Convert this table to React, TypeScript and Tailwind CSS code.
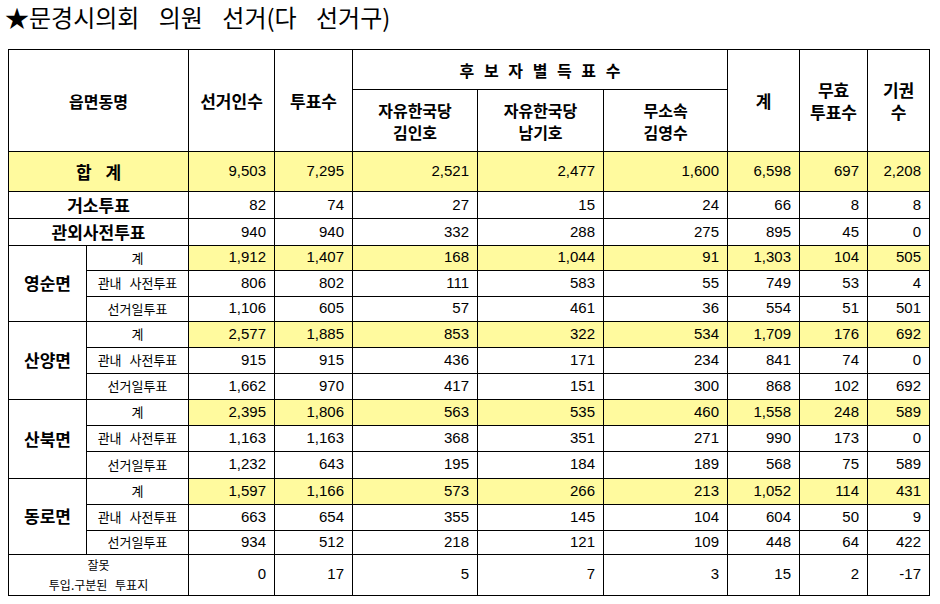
import React from "react";

type Row = { label: string; vals: string[]; h: number; yellow: boolean };
type Group = { name: string; rows: Row[] };

const KR = "font-['Noto_Sans_CJK_KR','Noto_Sans',sans-serif]";
const NUM = "font-['Liberation_Sans','Noto_Sans_CJK_KR',sans-serif]";
const YEL = "bg-[#fffa9e]";

const groups: Group[] = [
  {
    name: "영순면",
    rows: [
      { label: "계", vals: ["1,912", "1,407", "168", "1,044", "91", "1,303", "104", "505"], h: 25, yellow: true },
      { label: "관내 사전투표", vals: ["806", "802", "111", "583", "55", "749", "53", "4"], h: 26, yellow: false },
      { label: "선거일투표", vals: ["1,106", "605", "57", "461", "36", "554", "51", "501"], h: 25, yellow: false },
    ],
  },
  {
    name: "산양면",
    rows: [
      { label: "계", vals: ["2,577", "1,885", "853", "322", "534", "1,709", "176", "692"], h: 26, yellow: true },
      { label: "관내 사전투표", vals: ["915", "915", "436", "171", "234", "841", "74", "0"], h: 26, yellow: false },
      { label: "선거일투표", vals: ["1,662", "970", "417", "151", "300", "868", "102", "692"], h: 26, yellow: false },
    ],
  },
  {
    name: "산북면",
    rows: [
      { label: "계", vals: ["2,395", "1,806", "563", "535", "460", "1,558", "248", "589"], h: 26, yellow: true },
      { label: "관내 사전투표", vals: ["1,163", "1,163", "368", "351", "271", "990", "173", "0"], h: 26, yellow: false },
      { label: "선거일투표", vals: ["1,232", "643", "195", "184", "189", "568", "75", "589"], h: 27, yellow: false },
    ],
  },
  {
    name: "동로면",
    rows: [
      { label: "계", vals: ["1,597", "1,166", "573", "266", "213", "1,052", "114", "431"], h: 26, yellow: true },
      { label: "관내 사전투표", vals: ["663", "654", "355", "145", "104", "604", "50", "9"], h: 26, yellow: false },
      { label: "선거일투표", vals: ["934", "512", "218", "121", "109", "448", "64", "422"], h: 24, yellow: false },
    ],
  },
];

const cell = "border border-black p-0";

function Nums({ vals, yellow }: { vals: string[]; yellow: boolean }) {
  return (
    <>
      {vals.map((v, i) => (
        <td
          key={i}
          className={`${cell} ${yellow ? YEL : ""} ${NUM} text-right pr-[8px] text-[15px] text-black align-middle`}
        >
          {v}
        </td>
      ))}
    </>
  );
}

export default function App() {
  const widths = [78, 102, 86, 78, 125, 126, 124, 72, 68, 62];
  const head = `${cell} ${KR} text-[17px] font-bold leading-[22px]`;
  const sub = `${cell} ${KR} text-[16px] font-bold leading-[22px]`;
  return (
    <div className="w-[940px] h-[604px] bg-white text-black overflow-hidden">
      <div className={`h-[49px] pl-[5px] pt-[3px] ${KR} text-[24px] leading-[28px] [word-spacing:14px]`}>
        ★문경시의회 의원 선거(다 선거구)
      </div>
      <table className="ml-[8px] w-[922px] table-fixed border-collapse border border-black">
        <colgroup>
          {widths.map((w, i) => (
            <col key={i} style={{ width: w }} />
          ))}
        </colgroup>
        <thead>
          <tr className="h-[40px]">
            <th rowSpan={2} colSpan={2} className={`${cell} ${KR} text-[16px] font-bold leading-[20px]`}>
              읍면동명
            </th>
            <th rowSpan={2} className={head}>
              선거인수
            </th>
            <th rowSpan={2} className={head}>
              투표수
            </th>
            <th colSpan={3} className={`${cell} ${KR} text-[16px] font-bold leading-[20px] [word-spacing:6px]`}>
              후 보 자 별 득 표 수
            </th>
            <th rowSpan={2} className={head}>
              계
            </th>
            <th rowSpan={2} className={head}>
              무효
              <br />
              투표수
            </th>
            <th rowSpan={2} className={head}>
              기권
              <br />수
            </th>
          </tr>
          <tr className="h-[62px]">
            <th className={sub}>
              자유한국당
              <br />
              김인호
            </th>
            <th className={sub}>
              자유한국당
              <br />
              남기호
            </th>
            <th className={sub}>
              무소속
              <br />
              김영수
            </th>
          </tr>
        </thead>
        <tbody>
          <tr className="h-[40px]">
            <td colSpan={2} className={`${cell} ${YEL} ${KR} text-center text-[17px] font-bold [word-spacing:10px]`}>
              합 계
            </td>
            <Nums vals={["9,503", "7,295", "2,521", "2,477", "1,600", "6,598", "697", "2,208"]} yellow />
          </tr>
          <tr className="h-[27px]">
            <td colSpan={2} className={`${cell} ${KR} text-center text-[17px] font-bold`}>
              거소투표
            </td>
            <Nums vals={["82", "74", "27", "15", "24", "66", "8", "8"]} yellow={false} />
          </tr>
          <tr className="h-[26px]">
            <td colSpan={2} className={`${cell} ${KR} text-center text-[17px] font-bold`}>
              관외사전투표
            </td>
            <Nums vals={["940", "940", "332", "288", "275", "895", "45", "0"]} yellow={false} />
          </tr>
          {groups.map((g) =>
            g.rows.map((r, ri) => (
              <tr key={g.name + ri} style={{ height: r.h }}>
                {ri === 0 && (
                  <td rowSpan={3} className={`${cell} ${KR} text-center text-[17px] font-bold`}>
                    {g.name}
                  </td>
                )}
                <td className={`${cell} ${KR} text-center text-[13px] leading-[16px] [word-spacing:5px]`}>
                  {r.label}
                </td>
                <Nums vals={r.vals} yellow={r.yellow} />
              </tr>
            ))
          )}
          <tr className="h-[40px]">
            <td colSpan={2} className={`${cell} ${KR} text-center text-[12px] leading-[20px] [word-spacing:5px]`}>
              잘못
              <br />
              투입.구분된 투표지
            </td>
            <Nums vals={["0", "17", "5", "7", "3", "15", "2", "-17"]} yellow={false} />
          </tr>
        </tbody>
      </table>
    </div>
  );
}
